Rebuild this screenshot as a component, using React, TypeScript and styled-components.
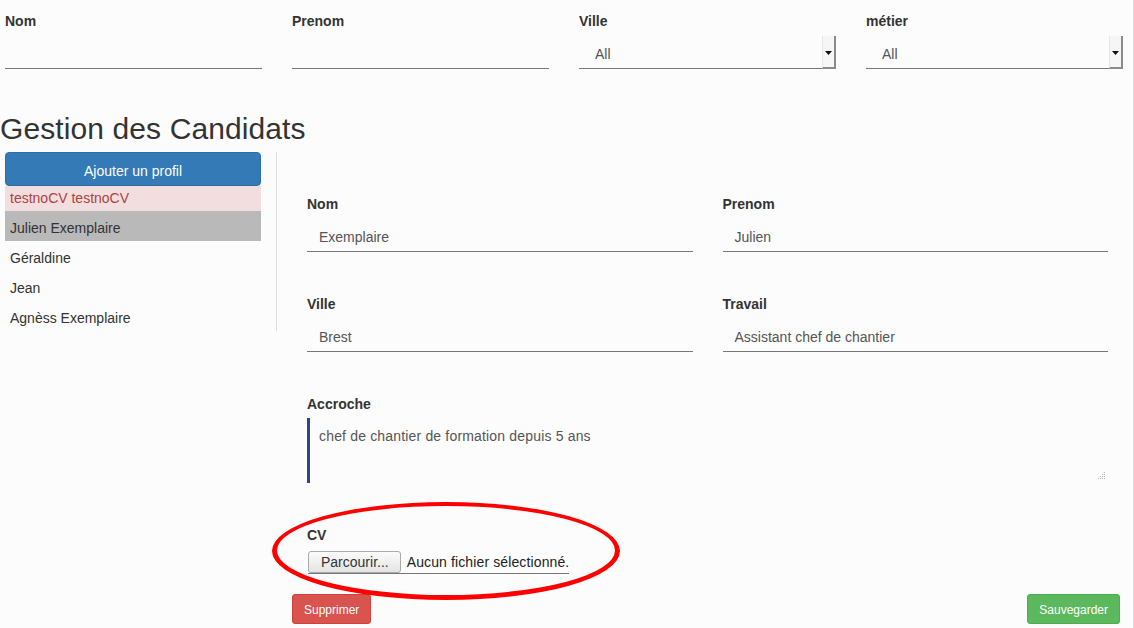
import React from "react";
import styled, { createGlobalStyle } from "styled-components";

const GlobalStyle = createGlobalStyle`
  html, body { margin: 0; padding: 0; background: #fcfcfc; }
  body {
    font-family: "Liberation Sans", Arial, sans-serif;
    font-size: 14px;
    color: #333;
  }
  * { box-sizing: border-box; }
`;

const Page = styled.div`
  position: relative;
  width: 1134px;
  height: 628px;
  overflow: hidden;
  border-right: 1px solid #e2e2e2;
  background: #fcfcfc;
`;

const FilterBar = styled.div`
  display: grid;
  grid-template-columns: repeat(4, 257px);
  column-gap: 30px;
  padding: 11px 0 0 5px;
`;

const FilterField = styled.div`
  display: flex;
  flex-direction: column;
`;

const Label = styled.div<{ $gap?: number }>`
  font-weight: bold;
  line-height: 20px;
  height: 20px;
  color: #333;
  margin-bottom: ${(p) => p.$gap ?? 5}px;
`;

const LineInput = styled.div`
  height: 33px;
  border-bottom: 1px solid #777;
`;

const SelectBox = styled.div`
  display: flex;
  height: 33px;
`;

const SelectValue = styled.div`
  flex: 1;
  border-bottom: 1px solid #777;
  padding: 5px 0 0 16px;
  line-height: 26px;
  color: #555;
`;

const SelectArrow = styled.div`
  width: 14px;
  display: flex;
  align-items: center;
  justify-content: center;
  background: #f6f6f6;
  border-left: 1px solid #e6e6e6;
  border-right: 2px solid #8a8a8a;
  border-bottom: 2px solid #8a8a8a;
  padding-top: 2px;
`;

const Title = styled.h1`
  margin: 43px 0 7px 0;
  font-size: 30px;
  line-height: 33px;
  font-weight: normal;
  color: #333;
  letter-spacing: 0.1px;
`;

const Main = styled.div`
  display: flex;
  align-items: flex-start;
  padding-left: 5px;
`;

const Sidebar = styled.div`
  width: 272px;
  padding-right: 15px;
  border-right: 1px solid #ddd;
`;

const AddButton = styled.div`
  height: 34px;
  line-height: 36px;
  text-align: center;
  background: #337ab7;
  color: #fff;
  border: 1px solid #2e6da4;
  border-radius: 4px;
`;

const ListItem = styled.div<{ $variant?: "danger" | "active" }>`
  height: ${(p) => (p.$variant === "danger" ? 25 : 30)}px;
  line-height: ${(p) => (p.$variant === "danger" ? 24 : 34)}px;
  padding-left: 5px;
  background: ${(p) =>
    p.$variant === "danger" ? "#f2dede" : p.$variant === "active" ? "#b9b9b9" : "transparent"};
  color: ${(p) => (p.$variant === "danger" ? "#a94442" : "#333")};
`;

const Content = styled.div`
  flex: 1;
  padding: 42px 13px 0 15px;
`;

const FormGrid = styled.div`
  display: grid;
  grid-template-columns: 1fr 1fr;
  column-gap: 30px;
  row-gap: 42px;
  padding: 0 12px 0 15px;
`;

const Field = styled.div<{ $wide?: boolean }>`
  grid-column: ${(p) => (p.$wide ? "1 / span 2" : "auto")};
`;

const TextInput = styled.div`
  height: 34px;
  padding: 5px 0 0 12px;
  line-height: 29px;
  color: #555;
  border-bottom: 1px solid #777;
`;

const TextArea = styled.div`
  position: relative;
  height: 65px;
  margin-top: 1px;
  padding: 8px 9px 0 9px;
  line-height: 20px;
  color: #555;
  letter-spacing: 0.17px;
  border-left: 3px solid #2b4593;
`;

const Grip = styled.svg`
  position: absolute;
  right: 2px;
  bottom: 3px;
`;

const FileRow = styled.div`
  display: inline-flex;
  align-items: center;
  border-bottom: 1px solid #777;
  margin-left: 1px;
  margin-top: 1px;
`;

const FileButton = styled.div`
  height: 22px;
  line-height: 20px;
  padding: 0 11px 0 12px;
  border: 1px solid #a9a9a9;
  border-radius: 3px;
  background: linear-gradient(#fbfbfb, #e4e4e4);
  color: #333;
`;

const FileText = styled.span`
  padding-left: 6px;
  color: #222;
  line-height: 20px;
  letter-spacing: 0.12px;
`;

const Actions = styled.div`
  display: flex;
  justify-content: space-between;
  margin-top: 20px;
`;

const ActionButton = styled.div<{ $tone: "danger" | "success" }>`
  height: 30px;
  padding: 0 11px;
  line-height: 30px;
  font-size: 12px;
  color: #fff;
  border-radius: 3px;
  background: ${(p) => (p.$tone === "danger" ? "#d9534f" : "#5cb85c")};
  border: 1px solid ${(p) => (p.$tone === "danger" ? "#d43f3a" : "#4cae4c")};
`;

const Highlight = styled.svg`
  position: absolute;
  left: 270px;
  top: 499px;
  pointer-events: none;
`;

const ellipse = (cx: number, cy: number, rx: number, ry: number) =>
  `M${cx - rx},${cy} a${rx},${ry} 0 1,0 ${2 * rx},0 a${rx},${ry} 0 1,0 ${-2 * rx},0 Z`;

const Arrow = () => (
  <svg width="7" height="4" viewBox="0 0 7 4">
    <path d="M0 0 H7 L3.5 4 Z" fill="#111" />
  </svg>
);

export default function App() {
  return (
    <Page>
      <GlobalStyle />
      <FilterBar>
        <FilterField>
          <Label>Nom</Label>
          <LineInput />
        </FilterField>
        <FilterField>
          <Label>Prenom</Label>
          <LineInput />
        </FilterField>
        <FilterField>
          <Label>Ville</Label>
          <SelectBox>
            <SelectValue>All</SelectValue>
            <SelectArrow>
              <Arrow />
            </SelectArrow>
          </SelectBox>
        </FilterField>
        <FilterField>
          <Label>métier</Label>
          <SelectBox>
            <SelectValue>All</SelectValue>
            <SelectArrow>
              <Arrow />
            </SelectArrow>
          </SelectBox>
        </FilterField>
      </FilterBar>

      <Title>Gestion des Candidats</Title>

      <Main>
        <Sidebar>
          <AddButton>Ajouter un profil</AddButton>
          <ListItem $variant="danger">testnoCV testnoCV</ListItem>
          <ListItem $variant="active">Julien Exemplaire</ListItem>
          <ListItem>Géraldine</ListItem>
          <ListItem>Jean</ListItem>
          <ListItem>Agnèss Exemplaire</ListItem>
        </Sidebar>

        <Content>
          <FormGrid>
            <Field>
              <Label $gap={4}>Nom</Label>
              <TextInput>Exemplaire</TextInput>
            </Field>
            <Field>
              <Label $gap={4}>Prenom</Label>
              <TextInput>Julien</TextInput>
            </Field>
            <Field>
              <Label $gap={4}>Ville</Label>
              <TextInput>Brest</TextInput>
            </Field>
            <Field>
              <Label $gap={4}>Travail</Label>
              <TextInput>Assistant chef de chantier</TextInput>
            </Field>
            <Field $wide>
              <Label $gap={4}>Accroche</Label>
              <TextArea>
                chef de chantier de formation depuis 5 ans
                <Grip width="9" height="9" viewBox="0 0 9 9">
                  <g fill="#b5b5b5">
                    <rect x="7" y="1" width="1" height="1" />
                    <rect x="5" y="3" width="1" height="1" />
                    <rect x="7" y="3" width="1" height="1" />
                    <rect x="3" y="5" width="1" height="1" />
                    <rect x="5" y="5" width="1" height="1" />
                    <rect x="7" y="5" width="1" height="1" />
                    <rect x="1" y="7" width="1" height="1" />
                    <rect x="3" y="7" width="1" height="1" />
                    <rect x="5" y="7" width="1" height="1" />
                    <rect x="7" y="7" width="1" height="1" />
                  </g>
                </Grip>
              </TextArea>
            </Field>
            <Field $wide>
              <Label $gap={5}>CV</Label>
              <FileRow>
                <FileButton>Parcourir...</FileButton>
                <FileText>Aucun fichier sélectionné.</FileText>
              </FileRow>
            </Field>
          </FormGrid>
          <Actions>
            <ActionButton $tone="danger">Supprimer</ActionButton>
            <ActionButton $tone="success">Sauvegarder</ActionButton>
          </Actions>
        </Content>
      </Main>

      <Highlight width="352" height="106" viewBox="0 0 352 106">
        <path
          d={`${ellipse(176, 52, 174, 49)} ${ellipse(176, 51.5, 169, 44.5)}`}
          fill="#f00"
          fillRule="evenodd"
        />
      </Highlight>
    </Page>
  );
}
